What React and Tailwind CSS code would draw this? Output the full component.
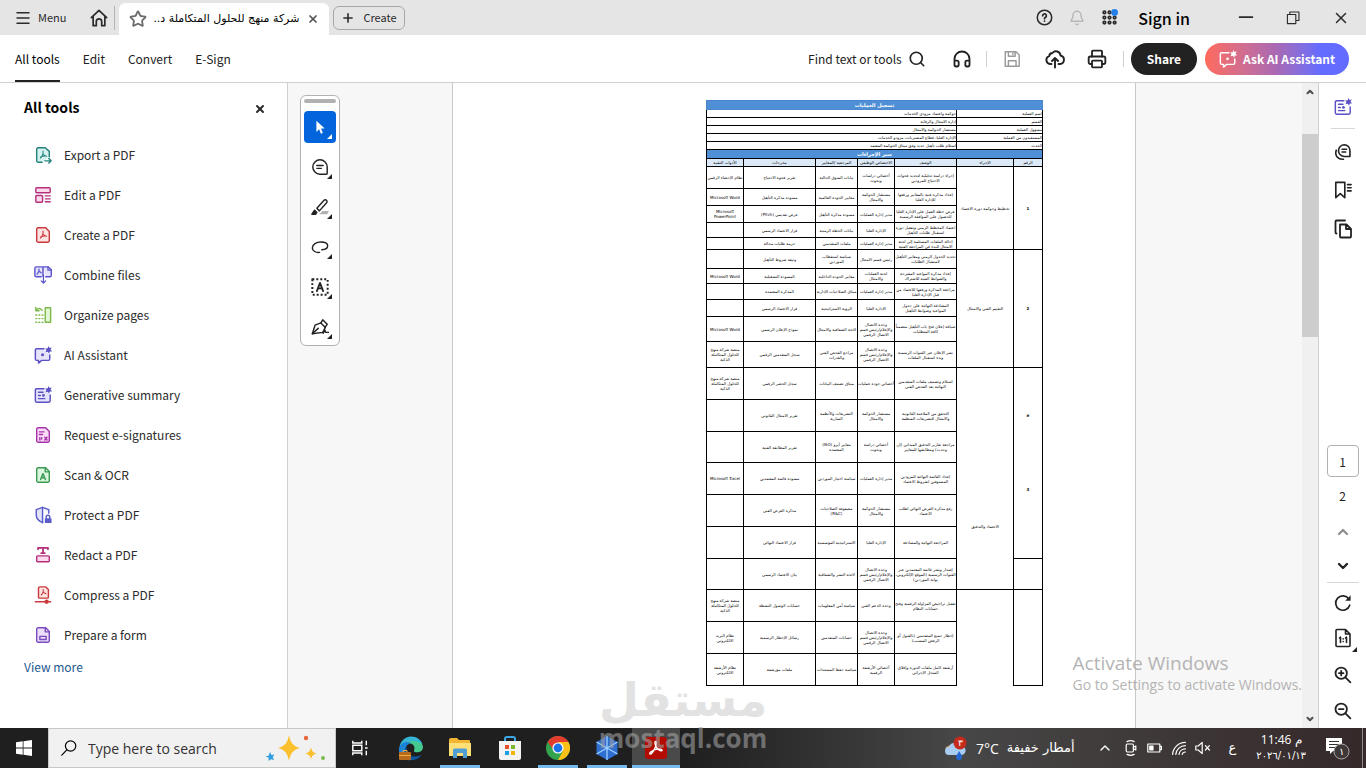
import { Bell, ChevronDown, ChevronUp, Headphones, Menu, Plus, Printer, Search, Star, X } from "lucide-react";

const Icon = ({ children, className = "size-5", ...rest }) => (
  <svg
    viewBox="0 0 20 20"
    fill="none"
    stroke="currentColor"
    strokeWidth="1.6"
    strokeLinecap="round"
    strokeLinejoin="round"
    aria-hidden="true"
    className={`shrink-0 ${className}`}
    {...rest}
  >
    {children}
  </svg>
);

const AcrobatMark = () => (
  <path d="M10 5.6v3.2c-.4 1.8-1.6 3.6-3 4.6M10 8.8c.7 1.3 2 2.2 4 2.5M7.6 12c2-.8 4-1.1 6.2-.8" strokeWidth="1.2" />
);

const Sparkle = () => (
  <path d="M16.2 0l1 2.2 2.6-.6-1.4 2.3L20 6l-2.5.1-.7 2.4-1.5-2-2.5.4 1-2.3-1.3-2.1 2.5.2z" fill="currentColor" stroke="none" />
);

const tools = [
  {
    label: "Export a PDF",
    color: "text-[#23837c]",
    icon: (
      <>
        <path d="M9 18H4.5A1.5 1.5 0 0 1 3 16.5v-13A1.5 1.5 0 0 1 4.5 2h8L17 6v6" fill="#d5f3f0" />
        <AcrobatMark />
        <path d="M12 16.5h6.5M16.5 14l2.5 2.5-2.5 2.5" />
      </>
    ),
  },
  {
    label: "Edit a PDF",
    color: "text-[#b5307c]",
    icon: (
      <>
        <rect x="2" y="2" width="16" height="5.5" rx="1" fill="#fbd9ec" />
        <rect x="2" y="10.5" width="7.5" height="7.5" rx="1" fill="#fbd9ec" />
        <path d="M12.5 11H18M12.5 14.3H18M12.5 17.6H18" />
      </>
    ),
  },
  {
    label: "Create a PDF",
    color: "text-[#c93a3f]",
    icon: (
      <>
        <path d="M3 3.5A1.5 1.5 0 0 1 4.5 2H13l4 4v10.5a1.5 1.5 0 0 1-1.5 1.5h-11A1.5 1.5 0 0 1 3 16.5z" fill="#fde3e1" />
        <AcrobatMark />
      </>
    ),
  },
  {
    label: "Combine files",
    color: "text-[#5b55cb]",
    icon: (
      <>
        <path d="M8 12H2.5A1.5 1.5 0 0 1 1 10.5v-8A1.5 1.5 0 0 1 2.5 1H10v10.5M10 1h6l3.2 3.2v6.3a1.5 1.5 0 0 1-1.5 1.5H13" fill="#e4e3fb" />
        <path d="M5.5 3.5v2.3L3.5 9M5.5 5.8L8 7.5M15.5 1v3.7h3.7M10.5 10v8.5M8 16.5l2.5 2.5 2.5-2.5" strokeWidth="1.4" />
      </>
    ),
  },
  {
    label: "Organize pages",
    color: "text-[#7dba4b]",
    icon: (
      <>
        <rect x="12.5" y="2" width="6" height="16" rx=".5" fill="#e3f7d4" />
        <path d="M9 5C7.5 2.3 4.5 2 2.5 4.5M2 1.5v3.7h3.7" />
        <path d="M2 10h8M2 14h8M2 18h8" strokeDasharray="1 2.5" />
      </>
    ),
  },
  {
    label: "AI Assistant",
    color: "text-[#5b4fc4]",
    icon: (
      <>
        <path d="M11 3H3a1.5 1.5 0 0 0-1.5 1.5v10A1.5 1.5 0 0 0 3 16h2v3l3.5-3H16a1.5 1.5 0 0 0 1.5-1.5V10" fill="#e6e4fa" />
        <Sparkle />
        <circle cx="9.5" cy="9.8" r="1.7" fill="currentColor" stroke="none" />
      </>
    ),
  },
  {
    label: "Generative summary",
    color: "text-[#5b4fc4]",
    icon: (
      <>
        <path d="M11 3H3a1.5 1.5 0 0 0-1.5 1.5v12A1.5 1.5 0 0 0 3 18h13.5a1.5 1.5 0 0 0 1.5-1.5V10" fill="#e6e4fa" />
        <path d="M5 7h5M5 10.5h2M5 14h7" />
        <circle cx="10.5" cy="10.5" r="1.5" fill="currentColor" stroke="none" />
        <Sparkle />
      </>
    ),
  },
  {
    label: "Request e-signatures",
    color: "text-[#a733a8]",
    icon: (
      <>
        <path d="M3 3.5A1.5 1.5 0 0 1 4.5 2H13l4 4v10.5a1.5 1.5 0 0 1-1.5 1.5h-11A1.5 1.5 0 0 1 3 16.5z" fill="#f9dbf9" />
        <path d="M6 6.5h5M6 9.5h3.5M6.5 13v2.5M8.5 13v1.5M12 12.5l2.5 3M14.5 12.5l-2.5 3" />
      </>
    ),
  },
  {
    label: "Scan & OCR",
    color: "text-[#3c9a53]",
    icon: (
      <>
        <path d="M3 3.5A1.5 1.5 0 0 1 4.5 2H13l4 4v10.5a1.5 1.5 0 0 1-1.5 1.5h-11A1.5 1.5 0 0 1 3 16.5z" fill="#d9f6df" />
        <path d="M12.5 2v4.5H17" />
        <path d="M7.3 15L10 8.5l2.7 6.5M8.2 13h3.6" />
      </>
    ),
  },
  {
    label: "Protect a PDF",
    color: "text-[#5a5cc9]",
    icon: (
      <>
        <path d="M9.5 1.5L2.5 4v6c0 4 3 6.8 7 8.5M9.5 1.5l7 2.5v4" fill="#e3e4fb" />
        <path d="M9.5 1.5v17" />
        <path d="M13.5 13.5v-1.3a2 2 0 0 1 4 0v1.3" />
        <rect x="12" y="13.5" width="7.5" height="5.5" rx=".8" fill="currentColor" stroke="none" />
      </>
    ),
  },
  {
    label: "Redact a PDF",
    color: "text-[#b5307c]",
    icon: (
      <>
        <path d="M4.5 3.5V2h11v1.5M10 2v6M8 8h4" strokeWidth="2" />
        <rect x="3" y="11" width="14" height="6.5" rx="1" fill="#fbd9ec" />
      </>
    ),
  },
  {
    label: "Compress a PDF",
    color: "text-[#c93a3f]",
    icon: (
      <>
        <path d="M5 2.5A1.5 1.5 0 0 1 6.5 1H13l3 3v8.5a1 1 0 0 1-1 1H6a1 1 0 0 1-1-1z" fill="#fde3e1" />
        <path d="M10.2 4v2.5c-.4 1.4-1.2 2.5-2.2 3.5M10.2 6.5c.6 1.2 1.6 1.7 3 2" strokeWidth="1.2" />
        <path d="M1.5 17.5h17" />
        <circle cx="14" cy="17.5" r="1.6" fill="currentColor" />
      </>
    ),
  },
  {
    label: "Prepare a form",
    color: "text-[#7a4cc0]",
    icon: (
      <>
        <path d="M3 3.5A1.5 1.5 0 0 1 4.5 2H13l4 4v10.5a1.5 1.5 0 0 1-1.5 1.5h-11A1.5 1.5 0 0 1 3 16.5z" fill="#ecdffb" />
        <path d="M12.5 2v4.5H17M6.5 11.5h7V15h-7z" />
      </>
    ),
  },
];

const quickTools = [
  {
    label: "Select",
    active: true,
    icon: <path d="M6 3v12.5l3-3 2 5 2.2-.9-2-4.8h4z" fill="currentColor" stroke="none" />,
  },
  {
    label: "Add comment",
    icon: (
      <>
        <path d="M10 2a8 8 0 1 0 0 16h7.2a.8.8 0 0 0 .8-.8V10a8 8 0 0 0-8-8z" />
        <path d="M6.5 8.3h7M6.5 11.5h5" />
      </>
    ),
  },
  {
    label: "Highlight",
    icon: (
      <>
        <path d="M9 18h9l2-3.5h-7z" fill="#b1b1b1" stroke="none" />
        <path d="M6.5 11.5l8-9a1.8 1.8 0 0 1 2.6 0l.2.2a1.8 1.8 0 0 1 0 2.6l-8 9z" />
        <path d="M4 13.5l2.5 2.5L5 18H1z" fill="currentColor" />
      </>
    ),
  },
  {
    label: "Draw",
    icon: <path d="M12 13c3.5 0 6.5-1.5 6.5-4.3C18.5 6 15 4.5 11 4.5c-5 0-9.5 2.5-9.5 6.5 0 3.5 4 5.5 8 5" />,
  },
  {
    label: "Add text",
    icon: (
      <>
        <rect x="1.5" y="1.5" width="17" height="17" strokeDasharray="2.2 2.2" strokeLinecap="butt" strokeWidth="2.2" />
        <path d="M6.5 14.5L10 5.5l3.5 9M7.8 11.5h4.4" strokeWidth="2" />
      </>
    ),
  },
  {
    label: "Fill and sign",
    icon: (
      <>
        <path d="M1.5 17.5l3-9.5 6.5-2.5 5 5L13 16z" />
        <path d="M1.5 17.5l6.5-6M11 5.5L13 2l5 5-2.5 3.5M13.5 17l2-3.5 1 2.5h3" />
      </>
    ),
  },
];

const details = [
  ["اسم العملية", "حوكمة واعتماد مزودي الخدمات"],
  ["القسم", "إدارة الامتثال والرقابة"],
  ["مسؤول العملية", "مستشار الحوكمة والامتثال"],
  ["المستفيدون من العملية", "الإدارة العليا، قطاع المشتريات، مزودو الخدمات"],
  ["الحدث", "استلام طلب تأهيل جديد وفق ميثاق الحوكمة المعتمد"],
];

const columns = ["الرقم", "الإجراء", "الوصف", "الاختصاص الوظيفي", "المرجعية /المعايير", "مخرجات", "الأدوات التقنية"];

const steps = [
  { h: "h-[22px]", no: 5, noText: "1", act: 5, actText: "تخطيط وحوكمة دورة الاعتماد", cells: ["إجراء دراسة تحليلية لتحديد فجوات الاحتياج للمزودين", "أخصائي دراسات وبحوث", "بيانات السوق الحالية", "تقرير فجوة الاحتياج", "نظام الإحصاء الرقمي"] },
  { h: "h-[17px]", cells: ["إعداد مذكرة فنية بالمعايير ورفعها للإدارة العليا", "مستشار الحوكمة والامتثال", "معايير الجودة العالمية", "مسودة مذكرة التأهيل", "Microsoft Word"] },
  { h: "h-[17px]", cells: ["عرض خطة العمل على الإدارة العليا للحصول على الموافقة الرسمية", "مدير إدارة العمليات", "مسودة مذكرة التأهيل", "عرض تقديمي (Pitch)", "Microsoft PowerPoint"] },
  { h: "h-[15px]", cells: ["اعتماد المخطط الزمني وتفعيل دورة استقبال طلبات التأهيل", "الإدارة العليا", "بيانات الخطة الزمنية", "قرار الاعتماد الرسمي", ""] },
  { h: "h-[12px]", cells: ["إحالة الملفات المستلمة إلى لجنة الامتثال للبدء في المراجعة الفنية", "مدير إدارة العمليات", "ملفات المتقدمين", "حزمة طلبات محالة", ""] },
  { h: "h-[19px]", no: 6, noText: "2", act: 6, actText: "التقييم الفني والامتثال", cells: ["تحديد الجدول الزمني ومعايير التأهيل لاستقبال الطلبات", "رئيس قسم الامتثال", "سياسة استقطاب الموردين", "وثيقة شروط التأهيل", ""] },
  { h: "h-[15px]", cells: ["إعداد مذكرة المواعيد المقترحة والضوابط الفنية للاشتراك", "لجنة العمليات والامتثال", "معايير الجودة الداخلية", "المسودة التشغيلية", "Microsoft Word"] },
  { h: "h-[16px]", cells: ["مراجعة المذكرة ورفعها للاعتماد من قبل الإدارة العليا", "مدير إدارة العمليات", "ميثاق الصلاحيات الإدارية", "المذكرة المعتمدة", ""] },
  { h: "h-[17px]", cells: ["المصادقة النهائية على جدول المواعيد وضوابط التأهيل", "الإدارة العليا", "الرؤية الاستراتيجية", "قرار الاعتماد الرسمي", ""] },
  { h: "h-[25px]", cells: ["صياغة إعلان فتح باب التأهيل متضمناً كافة المتطلبات", "وحدة الاتصال والإعلام/رئيس قسم الاتصال الرقمي", "لائحة الشفافية والامتثال", "نموذج الإعلان الرسمي", "Microsoft Word"] },
  { h: "h-[26px]", cells: ["نشر الإعلان عبر القنوات الرسمية وبدء استقبال الملفات", "وحدة الاتصال والإعلام/رئيس قسم الاتصال الرقمي", "مراجع الفحص الفني والقدرات", "سجل المتقدمين الرقمي", "منصة شركة منهج للحلول المتكاملة الذكية"] },
  { h: "h-[32px]", no: 6, noPair: ["#", "3"], act: 7, actText: "الاعتماد والتدقيق", actTop: true, cells: ["استلام وتصنيف ملفات المتقدمين النهائية بعد الفحص الفني", "أخصائي جودة عمليات", "ميثاق تصنيف البيانات", "سجل الحصر الرقمي", "منصة شركة منهج للحلول المتكاملة الذكية"] },
  { h: "h-[32px]", cells: ["التحقق من الملاءمة القانونية والامتثال للتشريعات المنظمة", "مستشار الحوكمة والامتثال", "التشريعات والأنظمة السارية", "تقرير الامتثال القانوني", ""] },
  { h: "h-[31px]", cells: ["مراجعة تقارير التدقيق الميداني (إن وجدت) ومطابقتها للمعايير", "أخصائي دراسة وبحوث", "معايير آيزو (ISO) المعتمدة", "تقرير المطابقة الفنية", ""] },
  { h: "h-[32px]", cells: ["إعداد القائمة النهائية للمزودين المستوفين لشروط الاعتماد", "مدير إدارة العمليات", "سياسة اختيار الموردين", "مسودة قائمة المعتمدين", "Microsoft Excel"] },
  { h: "h-[32px]", cells: ["رفع مذكرة العرض النهائي لطلب الاعتماد", "مستشار الحوكمة والامتثال", "مصفوفة الصلاحيات (R&C)", "مذكرة العرض الفني", ""] },
  { h: "h-[32px]", cells: ["المراجعة النهائية والمصادقة", "الإدارة العليا", "الاستراتيجية المؤسسية", "قرار الاعتماد النهائي", ""] },
  { h: "h-[31px]", no: 1, noText: "", cells: ["إصدار ونشر قائمة المعتمدين عبر القنوات الرسمية (الموقع الإلكتروني، بوابة الموردين)", "وحدة الاتصال والإعلام/رئيس قسم الاتصال الرقمي", "لائحة النشر والشفافية", "بيان الاعتماد الرسمي", ""] },
  { h: "h-[32px]", no: 3, noText: "", act: 3, actText: "", open: true, cells: ["تفعيل تراخيص المزاولة الرقمية وفتح حسابات النظام", "وحدة الدعم الفني", "سياسة أمن المعلومات", "حسابات الوصول النشطة", "منصة شركة منهج للحلول المتكاملة الذكية"] },
  { h: "h-[32px]", cells: ["إخطار جميع المتقدمين (بالقبول أو الرفض المسبب)", "وحدة الاتصال والإعلام/رئيس قسم الاتصال الرقمي", "حسابات المتقدمين", "رسائل الإخطار الرسمية", "نظام البريد الالكتروني"] },
  { h: "h-[32px]", cells: ["أرشفة كامل ملفات الدورة وإغلاق السجل الإجرائي", "أخصائي الأرشفة الرقمية", "سياسة حفظ المستندات", "ملفات مؤرشفة", "نظام الأرشفة الالكتروني"] },
];

const TitleBar = () => (
  <header className="flex h-[35px] shrink-0 items-center bg-[#e5e5e5] pl-3.5 text-[#2b2b2b]">
    <button className="flex items-center gap-1.5 text-[11px]">
      <Menu className="size-[18px]" strokeWidth={2} />
      Menu
    </button>
    <button aria-label="Home" className="ml-6">
      <Icon className="size-[18px]" strokeWidth="1.9">
        <path d="M1.5 9.5L10 1.5l8.5 8M3.5 8v10.5H7V14a3 3 0 0 1 6 0v4.5h3.5V8" />
      </Icon>
    </button>
    <div className="mr-1 ml-1.5 h-6 w-px bg-[#b5b5b5]" />
    <div className="flex h-8 w-[210px] items-center gap-1 self-end rounded-t-md bg-white px-2.5 text-black">
      <Star className="size-[18px] shrink-0 text-[#6b6b6b]" strokeWidth={2.4} />
      <span dir="rtl" className="flex-1 pr-1 text-right font-['DejaVu_Sans',sans-serif] text-[11px] leading-5 whitespace-nowrap">
        شركة منهج للحلول المتكاملة د..
      </span>
      <button aria-label="Close tab">
        <X className="size-3 text-[#555]" strokeWidth={3.5} />
      </button>
    </div>
    <button className="ml-1 flex h-6 items-center gap-2 rounded-md border border-[#a8a8a8] px-[7px] text-[11px]">
      <Plus className="size-3.5" strokeWidth={2.8} />
      Create
    </button>
    <div className="ml-auto flex items-center">
      <button aria-label="Help" className="mr-4">
        <Icon className="size-[17px]">
          <circle cx="10" cy="10" r="8.5" strokeWidth="1.8" />
          <path d="M7.8 8a2.2 2.2 0 1 1 3.4 1.8c-.8.5-1.2.8-1.2 1.7M10 14.3v.1" strokeWidth="2" />
        </Icon>
      </button>
      <button aria-label="Notifications" className="mr-4 text-[#b8b8b8]">
        <Bell className="size-4" strokeWidth={2.2} />
      </button>
      <button aria-label="Apps" className="mr-5">
        <Icon className="size-[17px]" strokeWidth="2">
          {[4, 10, 16].map((y) => [4, 10, 16].map((x) => <circle key={`${x}-${y}`} cx={x} cy={y} r="1.5" />))}
          <circle cx="16" cy="4" r="4" fill="#2680eb" stroke="none" />
        </Icon>
      </button>
      <button className="mr-12 text-[16px] font-medium text-black">Sign in</button>
      <button aria-label="Minimize" className="mr-8">
        <Icon className="size-4"><path d="M2 9h16" strokeWidth="2.2" /></Icon>
      </button>
      <button aria-label="Restore" className="mr-8">
        <Icon className="size-3.5"><path d="M2 5h12v13H2zM5.5 4.5V1.5h13v12h-4" /></Icon>
      </button>
      <button aria-label="Close" className="mr-4">
        <X className="size-[18px]" strokeWidth={2} />
      </button>
    </div>
  </header>
);

const Toolbar = () => (
  <div className="flex h-12 shrink-0 items-center border-b border-[#d0d0d0] bg-white text-[12px] text-[#222]">
    <nav className="flex h-full items-stretch gap-[23px] pl-[15px]">
      <button className="border-b-2 border-[#222] pt-0.5 text-black">All tools</button>
      <button className="border-b-2 border-transparent pt-0.5">Edit</button>
      <button className="border-b-2 border-transparent pt-0.5">Convert</button>
      <button className="border-b-2 border-transparent pt-0.5">E-Sign</button>
    </nav>
    <div className="mr-[17px] ml-auto flex items-center">
      <button className="mr-[26px] flex items-center gap-1.5">
        Find text or tools
        <Search className="size-[18px]" strokeWidth={2.2} />
      </button>
      <button aria-label="Support" className="mr-3.5"><Headphones className="size-5" strokeWidth={2.2} /></button>
      <div className="mr-4 h-4 w-px bg-[#d0d0d0]" />
      <button aria-label="Save" className="mr-6 text-[#9a9a9a]">
        <Icon className="size-[18px]">
          <path d="M2.5 2h12L18 5.5V18H2.5zM6 2v5h7.5V2M6 18v-6h8.5v6M11 3.5v1.5" />
        </Icon>
      </button>
      <button aria-label="Upload" className="mr-[22px]">
        <Icon className="size-5" strokeWidth="1.9">
          <path d="M6.5 15H5a4 4 0 0 1-.8-7.8A3.5 3.5 0 0 1 7.5 4a4.5 4.5 0 0 1 8 2.5A4.3 4.3 0 0 1 15 15h-1.5M10 18.5V9.5M7 12l3-3 3 3" />
        </Icon>
      </button>
      <button aria-label="Print" className="mr-4"><Printer className="size-5" strokeWidth={2.2} /></button>
      <div className="mr-[7px] h-4 w-px bg-[#d0d0d0]" />
      <button className="mr-2 h-8 rounded-full bg-[#222] px-4 font-bold text-white">Share</button>
      <button className="flex h-8 items-center gap-1.5 rounded-full bg-linear-to-r from-[#ff6a5b] via-[#a868b4] to-[#646cff] to-80% px-3.5 font-bold text-white">
        <Icon className="size-[18px]">
          <path d="M11 3H3a1.5 1.5 0 0 0-1.5 1.5v10A1.5 1.5 0 0 0 3 16h2v3l3.5-3H16a1.5 1.5 0 0 0 1.5-1.5V10" />
          <Sparkle />
          <circle cx="9.5" cy="9.8" r="1.5" fill="currentColor" stroke="none" />
        </Icon>
        Ask AI Assistant
      </button>
    </div>
  </div>
);

const ToolsPanel = () => (
  <aside className="w-72 shrink-0 overflow-hidden border-r border-[#d0d0d0] bg-white text-[12px] text-[#2b2b2b]">
    <div className="flex h-[52px] items-center justify-between pr-[19px] pl-6">
      <h2 className="pb-1 text-[14px] font-bold text-black">All tools</h2>
      <button aria-label="Close panel" className="p-0.5"><X className="size-3" strokeWidth={4} /></button>
    </div>
    <ul>
      {tools.map((tool) => (
        <li key={tool.label}>
          <button className="flex h-10 w-full items-center gap-3 pl-[34px]">
            <Icon className={`size-[18px] ${tool.color}`}>{tool.icon}</Icon>
            {tool.label}
          </button>
        </li>
      ))}
    </ul>
    <a href="#more" className="ml-6 inline-block leading-6 text-[#22588f]">View more</a>
  </aside>
);

const QuickToolbar = () => (
  <div className="absolute top-3 left-3 flex flex-col items-center rounded-md border border-[#b1b1b1] bg-white px-[3px] pt-[3px] pb-0.5">
    <div className="h-1 w-8 rounded-sm bg-[#b1b1b1]" />
    <div className="mt-2 flex flex-col gap-2">
      {quickTools.map((tool) => (
        <button
          key={tool.label}
          aria-label={tool.label}
          className={`relative flex size-8 items-center justify-center rounded-sm ${tool.active ? "bg-[#0265dc] text-white" : "text-[#222]"}`}
        >
          <Icon className="size-[18px]">{tool.icon}</Icon>
          <svg viewBox="0 0 5 5" aria-hidden="true" className="absolute right-1 bottom-1 size-[5px]">
            <path d="M5 0v5H0z" fill="currentColor" />
          </svg>
        </button>
      ))}
    </div>
  </div>
);

const ProcessTable = () => (
  <table
    dir="rtl"
    className="w-[337px] table-fixed border-collapse text-center font-['DejaVu_Sans',sans-serif] text-[4px] leading-[5px] text-black"
  >
    <colgroup>
      <col className="w-[29px]" />
      <col className="w-[57px]" />
      <col className="w-[62px]" />
      <col className="w-[37px]" />
      <col className="w-[42px]" />
      <col className="w-[72px]" />
      <col className="w-[37px]" />
    </colgroup>
    <tbody>
      <tr className="h-[9px]">
        <th colSpan={7} className="border border-[#4a86cf] bg-[#4f8fd6] p-0 text-[5px] text-white">تسجيل العمليات</th>
      </tr>
      {details.map(([name, value]) => (
        <tr key={name} className="h-[8px]">
          <th colSpan={2} className="border border-black p-0 text-right font-normal">{name}</th>
          <td colSpan={5} className="border border-black p-0 text-right">{value}</td>
        </tr>
      ))}
      <tr className="h-[9px]">
        <th colSpan={7} className="border border-black bg-[#4f8fd6] p-0 text-[5px] text-white">سير الإجراءات</th>
      </tr>
      <tr className="h-[8px] bg-[#dce9f7]">
        {columns.map((name) => (
          <th key={name} className="border border-black p-0 font-normal whitespace-nowrap">{name}</th>
        ))}
      </tr>
      {steps.map((step, i) => (
        <tr key={i} className={step.h}>
          {step.no && (
            <td rowSpan={step.no} className={`border border-black p-0 font-bold ${step.noPair ? "align-top" : "align-middle"}`}>
              {step.noPair ? (
                <div className="flex flex-col gap-[69px] pt-[45px]">
                  {step.noPair.map((mark) => <span key={mark}>{mark}</span>)}
                </div>
              ) : (
                step.noText
              )}
            </td>
          )}
          {step.act && (
            <td
              rowSpan={step.act}
              className={`border-black p-0 ${step.open ? "border-t" : "border"} ${step.actTop ? "pt-[156px] align-top" : "align-middle"}`}
            >
              {step.actText}
            </td>
          )}
          {step.cells.map((cell, j) => (
            <td key={j} className="border border-black p-0">{cell}</td>
          ))}
        </tr>
      ))}
    </tbody>
  </table>
);

const Scrollbar = () => (
  <div className="flex w-[16px] shrink-0 flex-col items-center bg-[#f0f0f0] text-[#505050]">
    <ChevronUp className="mt-1 size-2.5" strokeWidth={5} />
    <div className="mt-[37px] h-[203px] w-full bg-[#cdcdcd]" />
    <ChevronDown className="mt-auto mb-1 size-2.5" strokeWidth={5} />
  </div>
);

const RightRail = () => (
  <aside className="flex w-12 shrink-0 flex-col items-center border-l border-[#d0d0d0] bg-white text-[#222]">
    <button aria-label="Generative summary" className="mt-[15px] text-[#5b4fc4]">
      <Icon className="size-[18px]">
        <path d="M11 3H3a1.5 1.5 0 0 0-1.5 1.5v12A1.5 1.5 0 0 0 3 18h13.5a1.5 1.5 0 0 0 1.5-1.5V10M5 7h5M5 10.5h2M5 14h7" />
        <circle cx="10.5" cy="10.5" r="1.5" fill="currentColor" stroke="none" />
        <Sparkle />
      </Icon>
    </button>
    <div className="mt-3 h-px w-6 bg-[#d8d8d8]" />
    <button aria-label="Comments" className="mt-3.5">
      <Icon className="size-[18px]" strokeWidth="1.8">
        <path d="M11.5 2a6.5 6.5 0 1 0 0 13h6.2V8.5A6.3 6.3 0 0 0 11.5 2zM9 7h5M9 10h4" />
        <path d="M2.5 8c-2 6 2 10.5 8 10" />
      </Icon>
    </button>
    <button aria-label="Bookmarks" className="mt-5">
      <Icon className="size-[18px]" strokeWidth="1.8">
        <path d="M2 1.5h10v17L7 14l-5 4.5z" />
        <path d="M15 4h4M15 7.5h4M15 11h4" />
      </Icon>
    </button>
    <button aria-label="Pages" className="mt-5">
      <Icon className="size-5" strokeWidth="1.8">
        <path d="M7 5.5h6.5L18 10v7.5a1 1 0 0 1-1 1H8a1 1 0 0 1-1-1zM13 5.5V10h5M3.5 14.5a1 1 0 0 1-1-1v-11a1 1 0 0 1 1-1H12" />
      </Icon>
    </button>
    <input
      aria-label="Page number"
      defaultValue="1"
      className="mt-auto size-8 shrink-0 rounded-sm border border-[#b1b1b1] text-center text-[12px]"
    />
    <span className="mt-[7px] text-[12px] leading-6">2</span>
    <button aria-label="Previous page" className="mt-4 text-[#909090]"><ChevronUp className="size-4" strokeWidth={3.5} /></button>
    <button aria-label="Next page" className="mt-[18px]"><ChevronDown className="size-4" strokeWidth={3.5} /></button>
    <div className="mt-2 h-px w-8 bg-[#d8d8d8]" />
    <button aria-label="Rotate" className="mt-[11px]">
      <Icon className="size-[18px]" strokeWidth="1.9">
        <path d="M17.5 12.5A8 8 0 1 1 16.5 5.5" />
        <path d="M18.5 1.5v6h-6z" fill="currentColor" stroke="none" />
      </Icon>
    </button>
    <button aria-label="Actual size" className="relative mt-4 flex items-center">
      <Icon className="size-5">
        <path d="M3 2.5A1 1 0 0 1 4 1.5h8.5L17 6v11.5a1 1 0 0 1-1 1H4a1 1 0 0 1-1-1zM12.5 1.5V6H17M6.5 10l1-.8V14.5M12.5 10l1-.8V14.5M10.2 10.8v.1M10.2 13.5v.1" />
      </Icon>
      <svg viewBox="0 0 5 5" aria-hidden="true" className="absolute -right-1 -bottom-1 size-[5px]">
        <path d="M5 0v5H0z" fill="currentColor" />
      </svg>
    </button>
    <button aria-label="Zoom in" className="mt-[18px]">
      <Icon className="size-[18px]" strokeWidth="2"><circle cx="8" cy="8" r="6.3" /><path d="M12.7 12.7l5.5 5.5M5.5 8h5M8 5.5v5" /></Icon>
    </button>
    <button aria-label="Zoom out" className="mt-[18px] mb-2">
      <Icon className="size-[18px]" strokeWidth="2"><circle cx="8" cy="8" r="6.3" /><path d="M12.7 12.7l5.5 5.5M5.5 8h5" /></Icon>
    </button>
  </aside>
);

const Taskbar = () => (
  <footer className="flex h-10 shrink-0 items-stretch bg-linear-to-r from-[#1f1f1f] from-50% via-[#474747] via-70% to-[#35292a] font-['Open_Sans',sans-serif] text-white">
    <button aria-label="Start" className="flex w-12 items-center justify-center">
      <svg viewBox="0 0 16 16" className="size-4" fill="currentColor" aria-hidden="true">
        <path d="M0 2.3l6.7-1v6.3H0zM7.5 1.2L16 0v7.6H7.5zM0 8.4h6.7v6.3L0 13.7zM7.5 8.4H16V16l-8.5-1.2z" />
      </svg>
    </button>
    <label className="flex w-72 items-center border border-[#c8c8c8] bg-[#f1f1f1] pr-2 pl-3 text-black">
      <Icon className="size-4" strokeWidth="1.5"><circle cx="12" cy="7.5" r="6.5" /><path d="M7.3 12.3L1 19" /></Icon>
      <span className="sr-only">Search</span>
      <input
        placeholder="Type here to search"
        className="ml-[11px] w-0 flex-1 bg-transparent text-[14px] text-black placeholder:text-[#333]"
      />
      <svg viewBox="0 0 62 26" className="h-[26px] w-[62px]" aria-hidden="true">
        <path d="M24 0c1.5 8 4 11 11 13-7 2-9.5 5-11 13-1.5-8-4-11-11-13 7-2 9.5-5 11-13z" fill="#fbc02d" />
        <path d="M46 12c.8 4 2 5.5 5.5 6.5-3.5 1-4.7 2.5-5.5 6-.8-3.5-2-5-5.5-6 3.5-1 4.7-2.5 5.5-6.5z" fill="#fbc02d" />
        <path d="M5 17l1.5 3 3-.5-1.8 2.7 1.5 2.8-3.2-.7L3.5 26l.2-3.2L.5 21.5l3.3-1z" fill="#2f9fe0" />
        <circle cx="41" cy="3" r="2.2" fill="#e8663c" />
        <circle cx="58" cy="23" r="2" fill="#7cb950" />
      </svg>
    </label>
    <div className="flex items-stretch">
      <button aria-label="Task view" className="flex w-12 items-center justify-center">
        <Icon className="size-[18px]" strokeLinecap="butt"><path d="M2 2v2.5h10V2M2 18v-2.5h10V18M2 7h10v6H2zM17 2v5M17 13v5M15.5 10h3" strokeLinejoin="miter" /></Icon>
      </button>
      <button aria-label="Edge" className="flex w-[54px] items-center justify-center">
        <svg viewBox="0 0 26 26" className="size-[26px]" aria-hidden="true">
          <path d="M1.5 13A12 12 0 0 1 25 11.5c.3 5-4.5 6.5-8 5.5-2-.6-.5-2-.5-4 0-5-9-7.5-15 0z" fill="#46c98f" />
          <path d="M1.5 13A12 12 0 0 1 13 1.5c6 0 10 3.5 11.5 8C18 4 6 5 1.5 13z" fill="#35b5d6" />
          <path d="M1 14C2.5 7 9 6 13 8c-4 1-6 4-5.5 8 .6 5 5.5 8 12 6.5C12 28 0 25 1 14z" fill="#1b84d8" />
          <path d="M9.5 12c-2 5 2 10 8 9.5 2.5 0 4.5-.8 6-2-3 5.5-10 7-14 3C6.5 19.5 7 14 9.5 12z" fill="#0c59a4" />
          <rect x="1" y="17" width="12" height="8" rx="1" fill="#b86a1c" />
          <path d="M1 20.5h12M5 17v-1.5h4V17" stroke="#f4ad3d" fill="none" />
        </svg>
      </button>
      <button aria-label="File Explorer" className="mr-1 ml-0.5 flex w-10 items-center justify-center border-b-3 border-[#76b9ed]">
        <svg viewBox="0 0 24 22" className="mt-0.5 h-[22px] w-6" aria-hidden="true">
          <path d="M1 3a2 2 0 0 1 2-2h6l2 2h10a1 1 0 0 1 1 1v15H1z" fill="#f2b632" />
          <path d="M1 6h22v13H1z" fill="#ffdf78" />
          <path d="M5 21v-8a1.5 1.5 0 0 1 1.5-1.5h11A1.5 1.5 0 0 1 19 13v8h-4v-5H9v5z" fill="#4f9ed4" />
        </svg>
      </button>
      <button aria-label="Microsoft Store" className="flex w-[52px] items-center justify-center">
        <svg viewBox="0 0 24 26" className="h-[26px] w-6" aria-hidden="true">
          <path d="M7 7V4a2 2 0 0 1 2-2h6a2 2 0 0 1 2 2v3" stroke="#3ca7e4" strokeWidth="2" fill="none" />
          <path d="M1 6h22v17a2 2 0 0 1-2 2H3a2 2 0 0 1-2-2z" fill="#f3f3f3" />
          <path d="M7 10h4v4H7z" fill="#e8502d" /><path d="M13 10h4v4h-4z" fill="#7cb82f" />
          <path d="M7 16h4v4H7z" fill="#1d9ee0" /><path d="M13 16h4v4h-4z" fill="#f5b60d" />
        </svg>
      </button>
      <button aria-label="Chrome" className="mr-[9px] ml-0.5 flex w-10 items-center justify-center border-b-3 border-[#76b9ed]">
        <svg viewBox="0 0 24 24" className="mt-0.5 size-6" aria-hidden="true">
          <circle cx="12" cy="12" r="12" fill="#33a350" />
          <path d="M1.6 6A12 12 0 0 1 22.4 6L12 7 8 14.5z" fill="#e33b2e" />
          <path d="M22.4 6A12 12 0 0 1 12 24l5-9-5-9z" fill="#fbc116" />
          <circle cx="12" cy="12" r="5.6" fill="#fff" /><circle cx="12" cy="12" r="4.4" fill="#1a73e8" />
        </svg>
      </button>
      <button aria-label="Hexagon app" className="mr-[5px] flex w-10 items-center justify-center border-b-3 border-[#76b9ed]">
        <svg viewBox="0 0 24 26" className="mt-0.5 h-[26px] w-6" aria-hidden="true">
          <path d="M12 1l10.5 6v12L12 25 1.5 19V7z" fill="#2f6fd0" />
          <path d="M12 1v24M1.5 7l21 12M22.5 7l-21 12" stroke="#9fd0ff" strokeWidth="1.3" />
        </svg>
      </button>
      <button aria-label="Acrobat" className="flex w-12 items-center justify-center border-b-3 border-[#76b9ed] bg-[#4a4a4a]">
        <svg viewBox="0 0 20 20" className="mt-0.5 size-[22px]" aria-hidden="true">
          <rect width="20" height="20" rx="3" fill="#b30b00" />
          <path d="M9.6 4c1.6 0 .6 4-1 7-1.2 2.4-3 5-4 4.5-1.5-.8 2-3.5 5.5-4.2 2.7-.6 6-.3 5.5 1-.6 1.3-4.5-1-5.8-4C9 6.5 8.5 4 9.6 4z" stroke="#fff" strokeWidth="1.2" fill="none" />
        </svg>
      </button>
    </div>
    <div className="mr-[3px] ml-auto flex items-center border-r border-[#8a8a8a]">
      <svg viewBox="0 0 24 24" className="mr-2 size-6" aria-hidden="true">
        <path d="M1 12l5-3 2 5z" fill="#f0a050" />
        <path d="M5 19a4 4 0 0 1 0-8 6 6 0 0 1 11-1 4.5 4.5 0 0 1 2 9z" fill="#a9cdf2" />
        <path d="M15 15c2 3 3 4 3 6a3 3 0 0 1-6 0c0-2 2-3 3-6z" fill="#2467d1" />
        <circle cx="16" cy="7" r="6.5" fill="#c42b1c" />
        <text x="16" y="10" textAnchor="middle" fontSize="9" fill="#fff">٣</text>
      </svg>
      <span className="text-[14px]">7°C</span>
      <span dir="rtl" className="mr-[22px] ml-2 font-['DejaVu_Sans',sans-serif] text-[13px]">أمطار خفيفة</span>
      <ChevronUp className="mr-2.5 size-4" strokeWidth={2} />
      <Icon className="mr-2 size-4" strokeWidth="1.5"><rect x="4" y="5" width="9" height="10" rx="1.5" /><path d="M13 9l3-1.5v5L13 11M5 2c3-1.5 6-1.5 9 0M5 18c3 1.5 6 1.5 9 0" /></Icon>
      <Icon className="mr-2 size-4" strokeWidth="1.5"><path d="M1 5h15v10H1zM16 8h2v4h-2" /><path d="M3.5 7.5h4v5h-4z" fill="currentColor" /></Icon>
      <Icon className="mr-2 size-4" strokeWidth="1.5"><path d="M2 18A16 16 0 0 1 18 3M6 18A12 12 0 0 1 18 7M10 18a8 8 0 0 1 8-7M14 18a4 4 0 0 1 4-3" /></Icon>
      <Icon className="mr-[18px] size-4" strokeWidth="1.5"><path d="M1 7.5h3L9 3v14l-5-4.5H1zM13 7l5 5.5M18 7l-5 5.5" /></Icon>
      <span className="mr-5 font-['DejaVu_Sans',sans-serif] text-[13px]">ع</span>
      <div className="mr-5 text-center text-[12px] leading-4">
        <div>11:46 م</div>
        <div className="font-['DejaVu_Sans',sans-serif] text-[10px]">٢٠٢٦/٠١/١٣</div>
      </div>
      <svg viewBox="0 0 24 24" className="mr-3 size-6" aria-hidden="true">
        <path d="M0 2h16v13H7l-3 3v-3H0z" fill="#fff" />
        <path d="M3 5.5h10M3 8.5h10M3 11.5h6" stroke="#333" />
        <circle cx="15.5" cy="15.5" r="7.5" fill="#3f3838" stroke="#aaa" />
        <text x="15.5" y="19" textAnchor="middle" fontSize="10" fill="#fff">١</text>
      </svg>
    </div>
  </footer>
);

export default function App() {
  return (
    <div className="relative flex h-screen flex-col overflow-hidden bg-white font-['Noto_Sans_CJK_SC',sans-serif]">
      <TitleBar />
      <Toolbar />
      <div className="flex min-h-0 flex-1">
        <ToolsPanel />
        <main className="relative min-w-0 flex-1 overflow-hidden bg-[#f7f7f7] pr-0.5">
          <div className="mx-auto flex h-full w-[684px] justify-end border-x border-[#c8c8c8] bg-white pt-[17px] pr-[92px]">
            <div>
              <ProcessTable />
            </div>
          </div>
          <QuickToolbar />
        </main>
        <Scrollbar />
        <RightRail />
      </div>
      <Taskbar />

      {/* Watermarks */}
      <div className="pointer-events-none absolute right-[58px] bottom-[73px] font-['Open_Sans',sans-serif] text-[#b4b4b4]">
        <p className="text-[19px] leading-6">Activate Windows</p>
        <p className="pr-1.5 text-[14px] leading-5">Go to Settings to activate Windows.</p>
      </div>
      <div className="pointer-events-none absolute bottom-4 left-1/2 flex -translate-x-1/2 flex-col items-center">
        <span dir="rtl" className="font-['DejaVu_Sans',sans-serif] text-[46px] leading-[48px] font-bold text-[#e2e2e2]">مستقل</span>
        <span className="font-['Open_Sans',sans-serif] text-[26px] leading-7 font-bold text-[#a0a0a0]/60">mostaql.com</span>
      </div>
    </div>
  );
}
